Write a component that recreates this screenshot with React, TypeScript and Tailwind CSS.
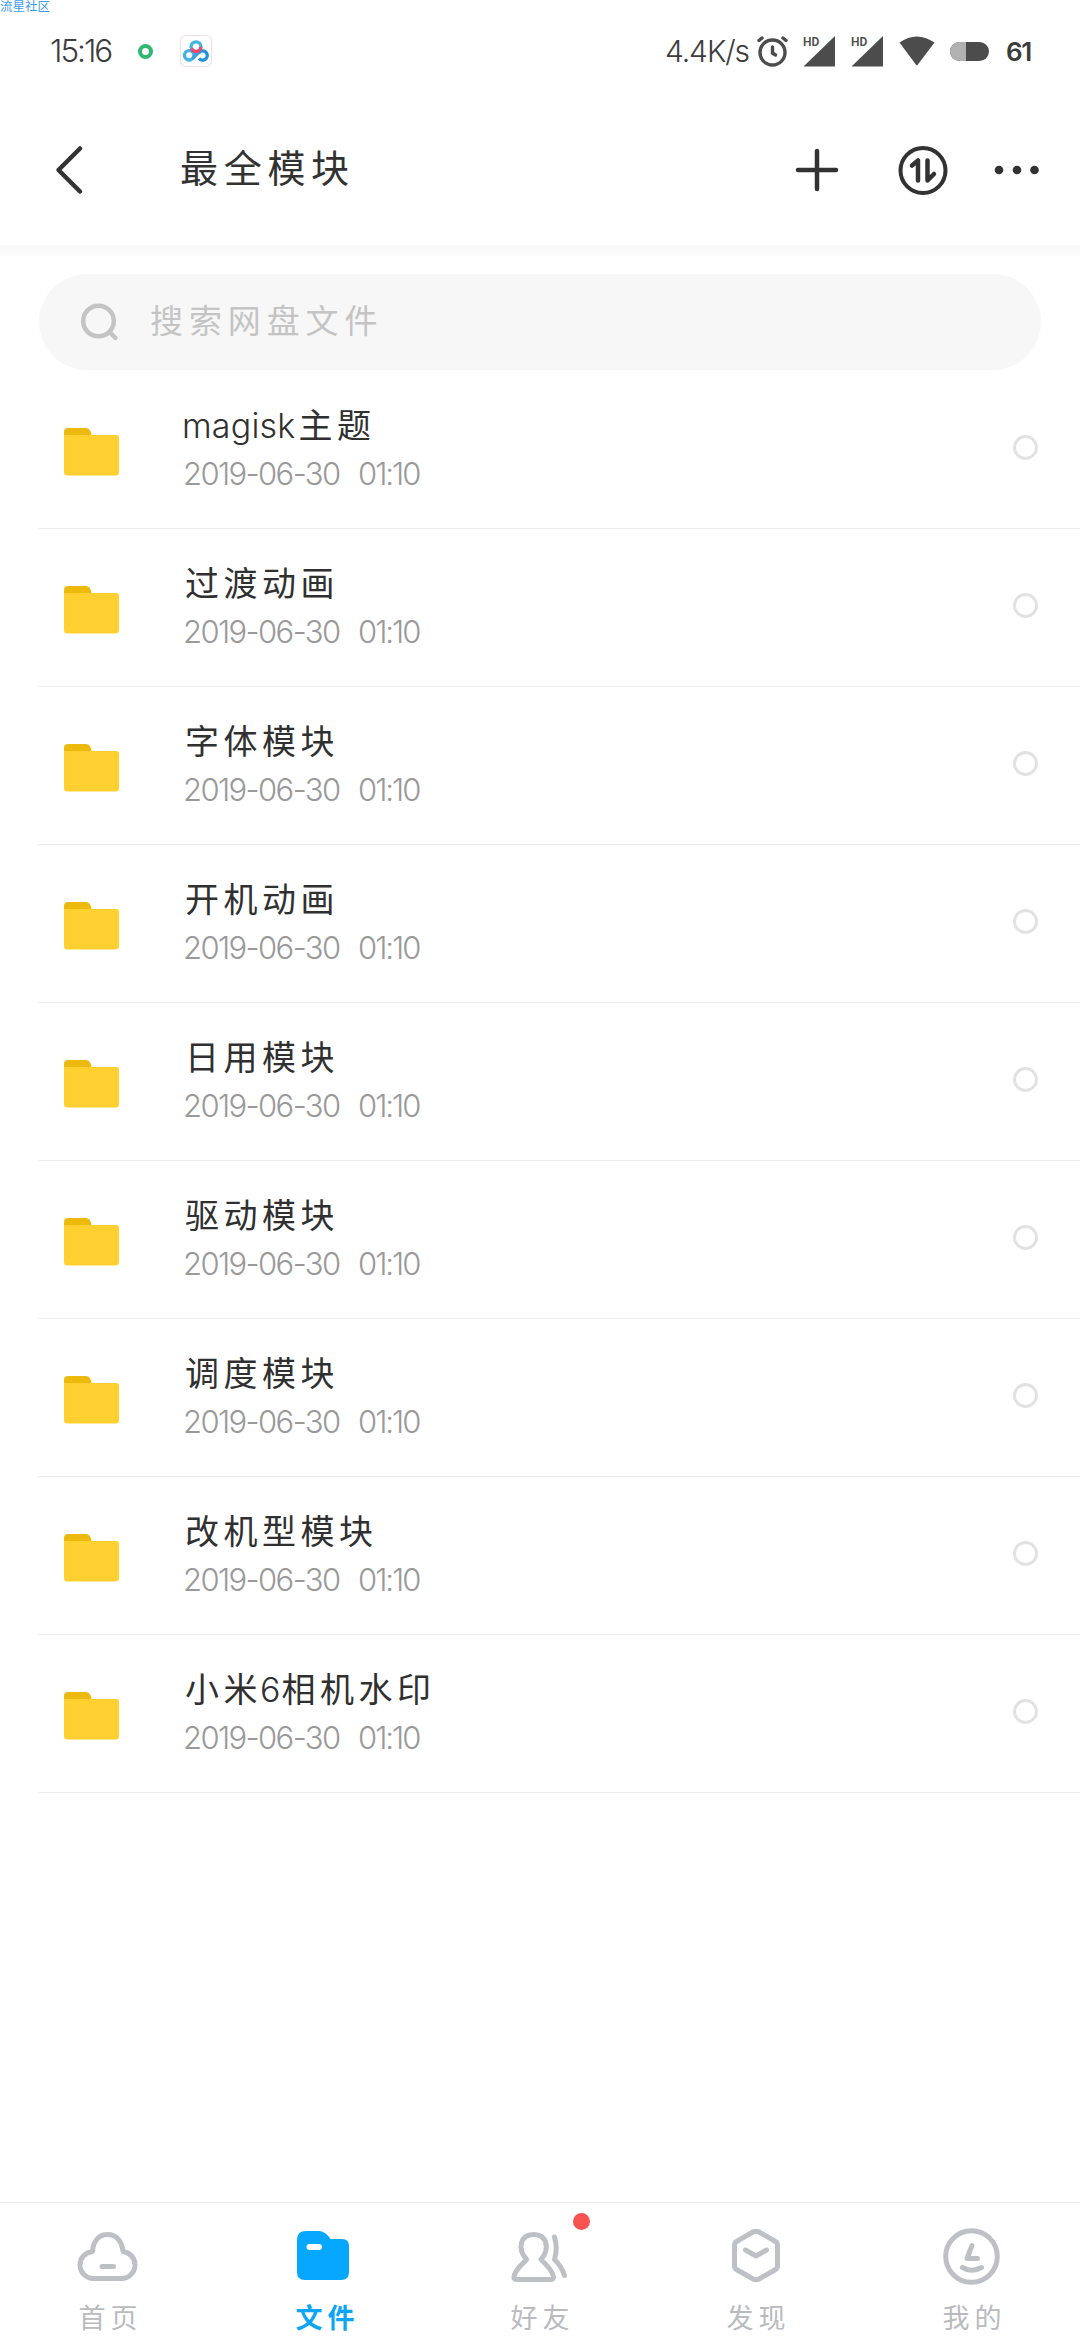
import React from 'react';

interface FolderItem {
  id: number;
  name: React.ReactNode;
  date: string;
  time: string;
}

const FOLDERS: FolderItem[] = [
  { id: 1, name: <><span className="-ml-[3px] font-light tracking-[0.2px]">magisk</span><span className="ml-[3px]">主题</span></>, date: '2019-06-30', time: '01:10' },
  { id: 2, name: '过渡动画', date: '2019-06-30', time: '01:10' },
  { id: 3, name: '字体模块', date: '2019-06-30', time: '01:10' },
  { id: 4, name: '开机动画', date: '2019-06-30', time: '01:10' },
  { id: 5, name: '日用模块', date: '2019-06-30', time: '01:10' },
  { id: 6, name: '驱动模块', date: '2019-06-30', time: '01:10' },
  { id: 7, name: '调度模块', date: '2019-06-30', time: '01:10' },
  { id: 8, name: '改机型模块', date: '2019-06-30', time: '01:10' },
  { id: 9, name: <>小米<span className="-ml-[2px] font-light tracking-[1px]">6</span>相机水印</>, date: '2019-06-30', time: '01:10' },
];

const SignalIcon: React.FC = () => (
  <svg width="33" height="32" viewBox="0 0 33 32" fill="#4c4c4c">
    <path d="M32 1v30.500H.5z" />
    <text x="0" y="10.500" fontSize="12" fontWeight="600" fontFamily="Roboto, sans-serif">HD</text>
  </svg>
);

const StatusBar: React.FC = () => (
  <div className="relative flex h-[102px] items-center pl-[50px] text-[#3c3c3c]">
    <span className="absolute left-0 top-0 text-[12.500px] leading-[14px] text-[#3b9df0]">流星社区</span>
    <span className="w-[88px] text-[31.500px] font-light tracking-[-2px]">15:16</span>
    <span className="h-[15px] w-[15px] rounded-full border-4 border-[#30b872]" />
    <span className="ml-[27px] flex h-8 w-8 items-center justify-center rounded-md border border-[#eadfe2]">
      <svg width="28" height="24" viewBox="0 0 28 24" fill="none" strokeWidth="3.300">
        <circle cx="7.200" cy="16.300" r="4.700" stroke="#42b4e2" />
        <path d="M17 19.500a4.700 4.700 0 1 0-.6-5" stroke="#2391d8" />
        <path d="M10.500 19.500L17 13" stroke="#389fe0" />
        <circle cx="14" cy="7.700" r="4.900" stroke="#42b4e2" />
        <path d="M18.900 7.700a4.900 4.900 0 0 1-9.400 1.800" stroke="#e94b70" />
      </svg>
    </span>
    <span className="ml-[453px] w-[92px] text-[30px] font-light tracking-[-1.100px]">4.4K/s</span>
    <svg width="31" height="31" viewBox="0 0 31 31" fill="none" stroke="#4c4c4c" strokeLinecap="round">
      <circle cx="15.500" cy="16.500" r="12.500" strokeWidth="3.400" />
      <path d="M15.500 11v6l3 2" strokeWidth="3.400" />
      <path d="M2 4.500L5 2M29 4.500L26 2" strokeWidth="3.400" />
    </svg>
    <span className="ml-[15px] flex gap-[15px]">
      <SignalIcon />
      <SignalIcon />
    </span>
    <svg className="ml-[15px]" width="36" height="30" viewBox="0 0 36 30" fill="#4c4c4c">
      <path d="M.5 6.500Q17.500-5.500 35.500 6.500L18.700 28.700Q17.800 29.700 17 28.700z" />
    </svg>
    <span className="ml-[15px] flex h-[19px] w-[39px] overflow-hidden rounded-full bg-[#4c4c4c]">
      <span className="w-4 bg-[#b1b1b1]" />
    </span>
    <span className="ml-[17px] text-[26px] font-semibold tracking-[-1.500px]">61</span>
  </div>
);

const Header: React.FC = () => (
  <div className="flex h-[143px] items-center pb-[7px] pl-[54px] text-[#323232]">
    <svg width="30" height="50" viewBox="0 0 30 50" fill="none" stroke="currentColor" strokeWidth="4.500" strokeLinecap="round" strokeLinejoin="round">
      <path d="M26 3.500L4.500 25L26 46.500" />
    </svg>
    <h1 className="mb-[5px] ml-24 w-[612px] text-[38px] leading-[50px] tracking-[5.700px]">最全模块</h1>
    <svg width="50" height="50" viewBox="0 0 50 50" stroke="currentColor" strokeWidth="4.500" strokeLinecap="round">
      <path d="M25 6v38M6 25h38" />
    </svg>
    <svg className="ml-[55px]" width="52" height="52" viewBox="0 0 52 52" fill="none" stroke="currentColor" strokeWidth="4" strokeLinecap="round" strokeLinejoin="round">
      <circle cx="26" cy="26.500" r="22.500" />
      <path d="M15 21.500L21 16.500V36.500M30.500 16.500V36.500L37 30" strokeWidth="4.500" />
    </svg>
    <svg className="ml-[44px]" width="48" height="10" viewBox="0 0 48 10" fill="currentColor">
      <circle cx="6" cy="5" r="4.300" />
      <circle cx="24" cy="5" r="4.300" />
      <circle cx="41.500" cy="5" r="4.300" />
    </svg>
  </div>
);

const SearchBar: React.FC = () => (
  <div className="mx-[39px] flex h-24 items-center rounded-full bg-[#f7f7f7] pl-[41px] text-[#c4c4c4]">
    <svg width="40" height="40" viewBox="0 0 40 40" fill="none" stroke="currentColor" strokeWidth="4.500" strokeLinecap="round">
      <circle cx="18.500" cy="19" r="15.300" />
      <path d="M30 30.500L35.500 36" />
    </svg>
    <span className="mb-[3px] ml-[30px] text-[33px] leading-10 tracking-[5.900px]">搜索网盘文件</span>
  </div>
);

const FolderRow: React.FC<{ item: FolderItem }> = ({ item }) => (
  <li className="ml-[38px] flex h-[158px] border-b-[1.500px] border-[#ededed] pl-[26px]">
    <svg className="mt-[57px]" width="56" height="48" viewBox="0 0 56 48">
      <path d="M0 12V4a4 4 0 0 1 4-4h18c3 0 5 3 5.500 7v5z" fill="#edb90c" />
      <path d="M0 7h52a3 3 0 0 1 3 3v34a3.500 3.500 0 0 1-3.500 3.500h-48A3.500 3.500 0 0 1 0 44z" fill="#ffd02f" />
    </svg>
    <div className="ml-[64px] flex-1 pt-[33px]">
      <div className="pl-[1px] text-[34px] leading-[44px] tracking-[4.500px] text-[#303030]">{item.name}</div>
      <div className="-ml-px flex pt-[6px] text-[31px] font-light leading-[40px] text-[#999]">
        <span className="w-[175px] tracking-[-1.600px]">{item.date}</span>
        <span className="tracking-[-2px]">{item.time}</span>
      </div>
    </div>
    <span className="mr-[42px] mt-[64px] h-[25px] w-[25px] rounded-full border-3 border-[#e2e2e2]" />
  </li>
);

const TABS = [
  {
    label: '首页',
    icon: (
      <g fill="none" stroke="#bdc0c5" strokeWidth="5" strokeLinecap="round" strokeLinejoin="round">
        <path d="M17.500 23.500C18 13 24 6.500 32.500 6.500S47 13 48 23.500C55 24.500 60 30 60 37A13.500 13.500 0 0 1 46.500 50.500H18.500A13.500 13.500 0 0 1 5 37C5 30 10 24.500 17.500 23.500z" />
        <path d="M27 38.500h11.500" />
      </g>
    ),
  },
  {
    label: '文件',
    active: true,
    icon: (
      <g>
        <path d="M6 12q0-9 9-9h13q6 0 11.500 8h11.500q7 0 7 7v26q0 8-8 8H14q-8 0-8-8z" fill="#06a7ff" />
        <path d="M18.500 19h9.500" stroke="#fff" strokeWidth="6" strokeLinecap="round" />
      </g>
    ),
  },
  {
    label: '好友',
    badge: true,
    icon: (
      <g fill="none" stroke="#bdc0c5" strokeWidth="5" strokeLinecap="round" strokeLinejoin="round">
        <path d="M19.700 31.500C10 21 13 6.500 26.700 6.500S43 21 34 31.500C41 38 45 42.500 46.500 48.500Q47 51.500 44 51.500H9.500Q6 51.500 7 48.500C8 42.500 13 38 19.700 31.500z" />
        <path d="M47.500 9Q51 20 47.500 31.500Q54.500 38 57.500 47.500" />
      </g>
    ),
  },
  {
    label: '发现',
    icon: (
      <g fill="none" stroke="#bdc0c5" strokeWidth="5" strokeLinecap="round" strokeLinejoin="round">
        <path d="M30 4q3-1.500 6 0l16.500 9.500q2 1 2 4v20q0 3-2 4l-16.500 9.500q-3 1.500-6 0l-16.500-9.500q-2-1-2-4V17.500q0-3 2-4z" />
        <path d="M22.500 22L33 28L43.500 22" />
      </g>
    ),
  },
  {
    label: '我的',
    icon: (
      <g fill="none" stroke="#bdc0c5" strokeWidth="5" strokeLinecap="round" strokeLinejoin="round">
        <circle cx="32.500" cy="28.500" r="25.800" />
        <path d="M33 17.500L28 30.500H38.500M23.500 39.500Q32.500 45 42.500 39.500" />
      </g>
    ),
  },
];

const TabBar: React.FC = () => (
  <nav className="grid h-[138px] grid-cols-5 border-t-[1.500px] border-[#e9e9e9] bg-white">
    {TABS.map((tab) => (
      <div key={tab.label} className="relative flex flex-col items-center pt-[25px]">
        <svg width="66" height="60" viewBox="0 0 66 60">{tab.icon}</svg>
        <span
          className={
            tab.active
              ? 'mt-[11px] pl-[7px] text-[27px] font-bold leading-10 tracking-[5px] text-[#0da5f5]'
              : 'mt-[11px] pl-[5px] text-[27px] leading-10 tracking-[5px] text-[#b9bbbf]'
          }
        >
          {tab.label}
        </span>
        {tab.badge && <span className="absolute left-[141px] top-[10px] h-[17px] w-[17px] rounded-full bg-[#f95351]" />}
      </div>
    ))}
  </nav>
);

export default function App() {
  return (
    <div className="flex h-[2340px] w-[1080px] flex-col overflow-hidden bg-white font-['Inter','Noto_Sans_CJK_SC',sans-serif]">
      <StatusBar />
      <Header />
      <div className="h-[29px] shrink-0 bg-linear-to-b from-[#f8f8f8] to-white to-50%" />
      <SearchBar />
      <ul className="flex-1 pt-px">
        {FOLDERS.map((item) => (
          <FolderRow key={item.id} item={item} />
        ))}
      </ul>
      <TabBar />
    </div>
  );
}
